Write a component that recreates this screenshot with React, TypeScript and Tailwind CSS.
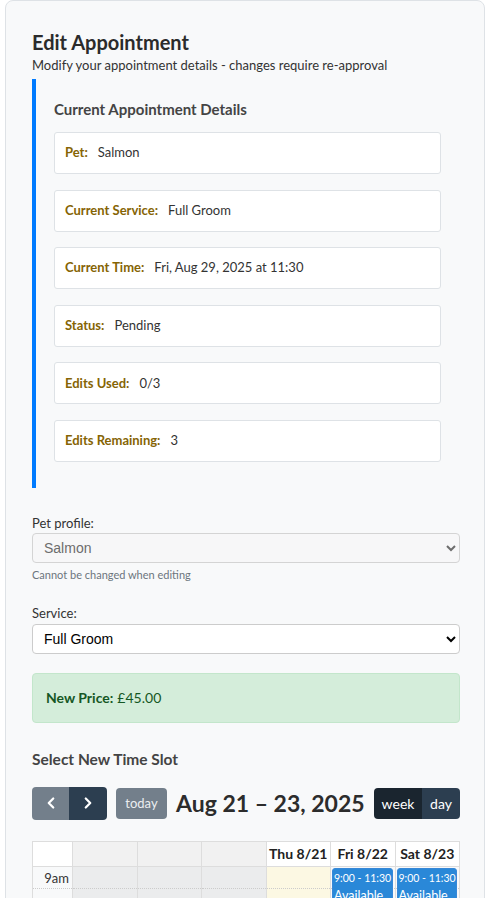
import { ChevronLeft, ChevronRight } from "lucide-react";

const details = [
  { label: "Pet:", value: "Salmon" },
  { label: "Current Service:", value: "Full Groom" },
  { label: "Current Time:", value: "Fri, Aug 29, 2025 at 11:30" },
  { label: "Status:", value: "Pending" },
  { label: "Edits Used:", value: "0/3" },
  { label: "Edits Remaining:", value: "3" },
];

const slots = ["9am", "", "10am", "", "11am", ""];

function DetailRow({ label, value }: { label: string; value: string }) {
  return (
    <div className="flex h-[42px] items-center rounded-[3px] border border-[#dee2e6] bg-white px-[10px] text-[13px]">
      <span className="font-bold text-[#856404]">{label}</span>
      <span className="ml-[10px] text-[#333]">{value}</span>
    </div>
  );
}

function slotClass(i: number) {
  return i % 2 === 0 ? "border-b border-dotted border-[#ccc]" : "border-b border-[#ddd]";
}

function Calendar() {
  return (
    <div className="mt-[21px] border-l border-t border-[#ddd]">
      {/* header row */}
      <div className="grid h-[25px] grid-cols-[40px_repeat(6,1fr)] text-[14px] font-bold text-[#222]">
        <div className="border-b border-r border-[#ddd] bg-white" />
        <div className="border-b border-r border-[#ddd] bg-[#f1f1f1]" />
        <div className="border-b border-r border-[#ddd] bg-[#f1f1f1]" />
        <div className="border-b border-r border-[#ddd] bg-[#f1f1f1]" />
        <div className="flex items-center justify-center border-b border-r border-[#ddd] bg-white">Thu 8/21</div>
        <div className="flex items-center justify-center border-b border-r border-[#ddd] bg-white">Fri 8/22</div>
        <div className="flex items-center justify-center border-b border-r border-[#ddd] bg-white">Sat 8/23</div>
      </div>
      {/* body */}
      <div className="grid grid-cols-[40px_repeat(6,1fr)]">
        <div className="border-r border-[#ddd]">
          {slots.map((s, i) => (
            <div key={i} className={`h-[22px] pr-[3px] text-right text-[13px] leading-[22px] text-[#333] ${slotClass(i)}`}>
              {s}
            </div>
          ))}
        </div>
        {[0, 1, 2].map((c) => (
          <div key={c} className="border-r border-[#ddd] bg-[#ebeced]">
            {slots.map((_, i) => (
              <div key={i} className={`h-[22px] ${slotClass(i)}`} />
            ))}
          </div>
        ))}
        <div className="border-r border-[#ddd] bg-[#fcf8e3]">
          {slots.map((_, i) => (
            <div key={i} className={`h-[22px] ${slotClass(i)}`} />
          ))}
        </div>
        {[0, 1].map((c) => (
          <div key={c} className="relative border-r border-[#ddd]">
            {slots.map((_, i) => (
              <div key={i} className={`h-[22px] ${slotClass(i)}`} />
            ))}
            {/* available slot event */}
            <div className="absolute left-[1px] right-[2px] top-[1px] h-[108px] overflow-hidden rounded-[3px] border border-[#3788d8] bg-[#2a88d8] px-[1px] text-white">
              <div className="whitespace-nowrap text-[10.5px] leading-[18px]">9:00 - 11:30</div>
              <div className="whitespace-nowrap text-[12.5px] leading-[18px]">Available</div>
            </div>
          </div>
        ))}
      </div>
    </div>
  );
}

export default function App() {
  return (
    <div
      className="h-[898px] overflow-hidden bg-white"
      style={{ fontFamily: '"Segoe UI", Lato, "Noto Sans", sans-serif' }}
    >
      <div className="ml-[5px] w-[480px] rounded-t-[8px] border border-[#dee2e6] bg-[#f8f9fa] pb-10 pl-[26px] pr-[24px] pt-[28px] text-[#333]">
        <h1 className="text-[20px] font-bold leading-[26px] text-[#2b2b2b]">Edit Appointment</h1>
        <p className="mt-[1px] text-[13px] leading-[19px] text-[#333]">
          Modify your appointment details - changes require re-approval
        </p>

        <div className="mt-[4px] border-l-4 border-[#007bff] pb-[26px] pl-[18px] pr-[19px] pt-[20px]">
          <h2 className="text-[15px] font-bold leading-[20px] text-[#444]">Current Appointment Details</h2>
          <div className="mt-[13px] flex flex-col gap-[15.6px]">
            {details.map((d) => (
              <DetailRow key={d.label} label={d.label} value={d.value} />
            ))}
          </div>
        </div>

        <div className="mt-[26px]">
          <label className="block text-[13px] leading-[18px] text-[#333]">Pet profile:</label>
          <select
            disabled
            className="mt-[1px] block h-[30px] w-full rounded-[4px] border border-[#d4d4d4] bg-[#f7f7f8] px-[7px] text-[14px] text-[#6d6d6d]"
            style={{ fontFamily: '"Liberation Sans", Arial, sans-serif' }}
          >
            <option>Salmon</option>
          </select>
          <p className="mt-[4px] text-[11px] leading-[15px] text-[#6c757d]">Cannot be changed when editing</p>
        </div>

        <div className="mt-[22px]">
          <label className="block text-[13px] leading-[18px] text-[#333]">Service:</label>
          <select
            className="mt-[2px] block h-[30px] w-full rounded-[4px] border border-[#ccc] bg-white px-[7px] text-[14px] text-black"
            style={{ fontFamily: '"Liberation Sans", Arial, sans-serif' }}
          >
            <option>Full Groom</option>
          </select>
        </div>

        <div className="mt-[19px] flex h-[50px] items-center rounded-[4px] border border-[#c3e6cb] bg-[#d4edda] px-[13px] text-[14px] text-[#155724]">
          <span className="font-bold">New Price:</span>
          <span className="ml-[4px]">£45.00</span>
        </div>

        <h3 className="mt-[26px] text-[15.5px] font-bold leading-[20px] text-[#444]">Select New Time Slot</h3>

        <div className="mt-[18px] flex items-center">
          <div className="flex h-[33px] overflow-hidden rounded-[4px]">
            <button className="flex w-[37px] items-center justify-center bg-[#737f8b] text-white">
              <ChevronLeft size={18} strokeWidth={3} />
            </button>
            <button className="flex w-[38px] items-center justify-center bg-[#2c3e50] text-white">
              <ChevronRight size={18} strokeWidth={3} />
            </button>
          </div>
          <button className="ml-[9px] h-[31px] w-[51px] rounded-[4px] bg-[#737f8b] text-[13px] text-[#eceef0]">
            today
          </button>
          <h2 className="ml-[9px] text-[23px] font-bold leading-[30px] text-[#2c2c2c]">Aug 21 – 23, 2025</h2>
          <div className="ml-auto flex h-[31px] overflow-hidden rounded-[4px] text-[14px] text-white">
            <button className="w-[48px] bg-[#1a252f]">week</button>
            <button className="w-[38px] bg-[#2c3e50]">day</button>
          </div>
        </div>

        <Calendar />
      </div>
    </div>
  );
}
